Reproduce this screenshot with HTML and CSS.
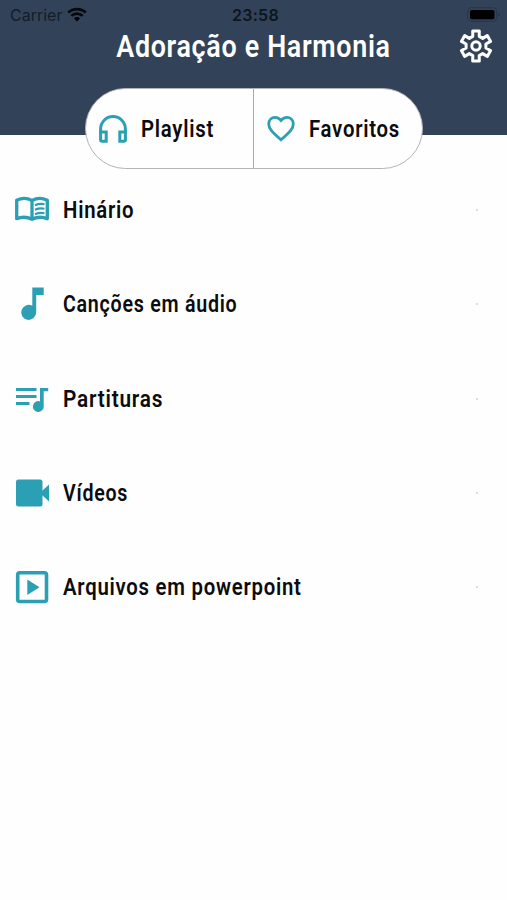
FILE: index.html
```html
<!DOCTYPE html>
<html lang="pt">
<head>
    <meta charset="UTF-8">
    <meta name="viewport" content="width=device-width, initial-scale=1.0">
    <title>Adoração e Harmonia</title>
    <link rel="stylesheet" href="styles.css">
</head>
<body>
    <header class="header">
        <div class="status-bar">
            <div class="carrier">
                <span>Carrier</span>
                <svg width="20" height="15" viewBox="0 0 20 15">
                    <path d="M10 14.6l3.1-3.3a4.6 4.6 0 0 0-6.2 0z"/>
                    <path d="M1.2 5.6a12.8 12.8 0 0 1 17.6 0M4.3 8.9a8.2 8.2 0 0 1 11.4 0" fill="none" stroke="#05090e" stroke-width="2.7"/>
                </svg>
            </div>
            <span class="clock">23:58</span>
            <svg class="battery" width="34" height="15" viewBox="0 0 34 15">
                <rect x=".7" y=".7" width="29" height="13.6" rx="4" fill="none" stroke="#2a374a" stroke-width="1.2"/>
                <rect x="3" y="3" width="24.5" height="9.2" rx="1.8"/>
                <path d="M31.5 5.5q2 2 0 4z" fill="#222e3e"/>
            </svg>
        </div>
        <div class="title-bar">
            <h1 class="title">Adoração e Harmonia</h1>
            <svg class="gear" width="34" height="34" viewBox="0 0 34 34" fill="none" stroke="#fff" stroke-width="3" stroke-linejoin="round">
                <path d="M13.7 2h6.6l-.1 5.4 3.5 2 4.6-2.8 3.3 5.8-4.7 2.6v4l4.7 2.600-3.300 5.800-4.600-2.800-3.500 2 .1 5.400h-6.600l.1-5.400-3.500-2-4.600 2.800-3.300-5.800L7.100 19v-4l-4.700-2.600 3.300-5.800 4.600 2.800 3.500-2z"/>
                <circle cx="17" cy="17" r="4.2"/>
            </svg>
        </div>
    </header>

    <nav class="tabs">
        <a class="tab">
            <svg width="28" height="28" viewBox="0 0 28 28" fill="none" stroke="#2b9fb4" stroke-width="3">
                <path d="M1.6 18V14a12.4 12.4 0 0 1 24.8 0v4"/>
                <path d="M1.6 17h5.6v9.2H3.1q-1.5 0-1.5-1.5zM26.4 17h-5.6v9.2h4.1q1.5 0 1.5-1.5z"/>
            </svg>
            <span class="label playlist">Playlist</span>
        </a>
        <a class="tab">
            <svg width="28" height="28" viewBox="0 0 28 28" fill="none" stroke="#2b9fb4" stroke-width="2.8">
                <path d="M14 24.8C5 17 1.7 13.5 1.7 8.9 1.7 5 4.6 2.3 8 2.3c2.4 0 4.5 1.2 6 3.1 1.5-1.9 3.6-3.1 6-3.1 3.4 0 6.3 2.7 6.3 6.6 0 4.6-3.3 8.1-12.3 15.9z"/>
            </svg>
            <span class="label favoritos">Favoritos</span>
        </a>
    </nav>

    <main class="menu">
        <a class="item">
            <svg width="36" height="36" viewBox="0 0 36 36" fill="none" stroke="#2b9fb4" stroke-width="3.3">
                <path d="M18 8.5Q10.500 4.500 2.700 8.200v18.500Q10.500 23.500 18 27.300 25.500 23.500 33.300 26.700V8.200Q25.500 4.500 18 8.500zv18.500" stroke-linejoin="round"/>
                <path d="M21 13.200q4.500-2 9.500-1M21 17.700q4.500-2 9.500-1M21 22.200q4.500-2 9.500-1" stroke-width="2.1"/>
            </svg>
            <span class="label hinario">Hinário</span>
            <i class="dot"></i>
        </a>
        <a class="item">
            <svg width="36" height="36" viewBox="0 0 36 36" fill="#2b9fb4">
                <path d="M18.300 1.500h11.400v7.500h-7.500v17.300a7.500 7.500 0 1 1-3.900-6.500z"/>
            </svg>
            <span class="label cancoes">Canções em áudio</span>
            <i class="dot"></i>
        </a>
        <a class="item">
            <svg width="36" height="36" viewBox="0 0 36 36" fill="#2b9fb4">
                <path d="M2 7h20.500v3H2zM2 14h20.500v3H2zM2 21h13.500v3H2z"/>
                <path d="M26 7h8.200v3.300h-4.500v15.200a5.400 5.400 0 1 1-3.700-5.100z"/>
            </svg>
            <span class="label partituras">Partituras</span>
            <i class="dot"></i>
        </a>
        <a class="item">
            <svg width="36" height="36" viewBox="0 0 36 36" fill="#2b9fb4">
                <rect x="2" y="4.500" width="26.500" height="27" rx="2.500"/>
                <path d="M28 16l7-6.500v17L28 20z"/>
            </svg>
            <span class="label videos">Vídeos</span>
            <i class="dot"></i>
        </a>
        <a class="item">
            <svg width="36" height="36" viewBox="0 0 36 36" fill="#2b9fb4">
                <rect x="3.700" y="3.700" width="28.800" height="28.800" rx="2" fill="none" stroke="#2b9fb4" stroke-width="3.600"/>
                <path d="M13.300 10.500v15.500l12.200-7.700z"/>
            </svg>
            <span class="label arquivos">Arquivos em powerpoint</span>
            <i class="dot"></i>
        </a>
    </main>
</body>
</html>
```

FILE: styles.css
```css
*{
    box-sizing: border-box;
}
body{
    margin: 0;
    background-color: #fefefe;
    font-family: Roboto, "Liberation Sans", sans-serif;
    color: #0c0c0e;
}
svg{
    display: block;
    flex: none;
}
.header{
    height: 135px;
    background-color: #324258;
}
.status-bar{
    display: grid;
    grid-template-columns: 1fr auto 1fr;
    align-items: center;
    height: 29px;
    padding: 0 6px 0 10px;
    font-family: Inter, sans-serif;
    font-size: 16px;
    color: #131d29;
}
.carrier{
    display: flex;
    align-items: center;
    gap: 5px;
}
.clock{
    font-weight: 600;
    letter-spacing: 0.3px;
    color: #0d151f;
}
.battery{
    justify-self: end;
}
.title-bar{
    display: grid;
    grid-template-columns: 34px 1fr 34px;
    align-items: center;
    height: 34px;
    padding: 0 14px;
}
.title{
    grid-column: 2;
    margin: 0;
    font-size: 32px;
    font-weight: 600;
    line-height: 34px;
    text-align: center;
    white-space: nowrap;
    color: #fff;
    letter-spacing: 0.8px;
    transform: scaleX(0.84);
}
/* white pill that hangs over the lower edge of the header */
.tabs{
    position: relative;
    display: flex;
    width: 338px;
    height: 81px;
    margin: -47px auto 0;
    border: 1.5px solid #b4b4b4;
    border-radius: 41px;
    background-color: #fefefe;
}
.tab{
    display: flex;
    flex: 1;
    align-items: center;
    gap: 14px;
    padding-left: 13px;
}
.tab + .tab{
    border-left: 1px solid #aaa;
}
.label{
    font-size: 24.5px;
    font-weight: 600;
    line-height: 30px;
    letter-spacing: 0.9px;
    white-space: nowrap;
    transform: scaleX(0.83);
    transform-origin: left;
}
.cancoes{
    transform: scaleX(0.803);
}
.partituras{
    transform: scaleX(0.85);
}
.videos{
    transform: scaleX(0.8);
}
.menu{
    margin-top: -6px;
}
.item{
    display: flex;
    align-items: center;
    height: 94.3px;
    padding: 0 29px 0 14px;
}
.item .label{
    margin-left: 13px;
}
.dot{
    width: 2px;
    height: 2px;
    margin-left: auto;
    background-color: #dedede;
}
```
